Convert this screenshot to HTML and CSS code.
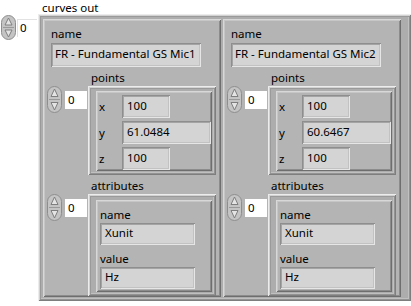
FILE: index.html
```html
<!DOCTYPE html>
<html lang="en">
<head>
    <meta charset="UTF-8">
    <title>curves out</title>
    <link rel="stylesheet" href="styles.css">
</head>
<body>
    <div class="caption">curves out</div>
    <div class="array-row">
        <div class="index outer-index">
            <svg class="spin" width="15" height="25" viewBox="0 0 15 25">
                <rect x="0.5" y="0.5" width="14" height="24" rx="7" fill="#c4c4c4" stroke="#8e8e8e"/>
                <path d="M7.5 3 L11 10 L4 10 Z" fill="#e4e4e4" stroke="#7e7e7e"/>
                <path d="M7.5 22 L11 15 L4 15 Z" fill="#e4e4e4" stroke="#7e7e7e"/>
                <line x1="2" y1="12.5" x2="13" y2="12.5" stroke="#9a9a9a"/>
            </svg>
            <div class="num">0</div>
        </div>
        <div class="array-frame outer-frame">
            <div class="cluster">
                <div class="lbl">name</div>
                <div class="field name-field">FR - Fundamental GS Mic1</div>
                <div class="lbl sub-lbl">points</div>
                <div class="sub-row">
                    <div class="index">
                        <svg class="spin" width="15" height="27" viewBox="0 0 15 27">
                            <rect x="0.5" y="0.5" width="14" height="26" rx="7" fill="#c4c4c4" stroke="#8e8e8e"/>
                            <path d="M7.5 3 L11 10.5 L4 10.5 Z" fill="#e4e4e4" stroke="#7e7e7e"/>
                            <path d="M7.5 24 L11 16.5 L4 16.5 Z" fill="#e4e4e4" stroke="#7e7e7e"/>
                            <line x1="2" y1="13.5" x2="13" y2="13.5" stroke="#9a9a9a"/>
                        </svg>
                        <div class="num">0</div>
                    </div>
                    <div class="array-frame points-frame">
                        <div class="cluster inner xyz">
                            <div class="axis">x</div><div class="field short">100</div>
                            <div class="axis">y</div><div class="field long">61.0484</div>
                            <div class="axis">z</div><div class="field short">100</div>
                        </div>
                    </div>
                </div>
                <div class="lbl sub-lbl">attributes</div>
                <div class="sub-row">
                    <div class="index">
                        <svg class="spin" width="15" height="27" viewBox="0 0 15 27">
                            <rect x="0.5" y="0.5" width="14" height="26" rx="7" fill="#c4c4c4" stroke="#8e8e8e"/>
                            <path d="M7.5 3 L11 10.5 L4 10.5 Z" fill="#e4e4e4" stroke="#7e7e7e"/>
                            <path d="M7.5 24 L11 16.5 L4 16.5 Z" fill="#e4e4e4" stroke="#7e7e7e"/>
                            <line x1="2" y1="13.5" x2="13" y2="13.5" stroke="#9a9a9a"/>
                        </svg>
                        <div class="num">0</div>
                    </div>
                    <div class="array-frame attr-frame">
                        <div class="cluster inner attr">
                            <div class="lbl">name</div>
                            <div class="field attr-field">Xunit</div>
                            <div class="lbl">value</div>
                            <div class="field attr-field">Hz</div>
                        </div>
                    </div>
                </div>
            </div>
            <div class="cluster">
                <div class="lbl">name</div>
                <div class="field name-field">FR - Fundamental GS Mic2</div>
                <div class="lbl sub-lbl">points</div>
                <div class="sub-row">
                    <div class="index">
                        <svg class="spin" width="15" height="27" viewBox="0 0 15 27">
                            <rect x="0.5" y="0.5" width="14" height="26" rx="7" fill="#c4c4c4" stroke="#8e8e8e"/>
                            <path d="M7.5 3 L11 10.5 L4 10.5 Z" fill="#e4e4e4" stroke="#7e7e7e"/>
                            <path d="M7.5 24 L11 16.5 L4 16.5 Z" fill="#e4e4e4" stroke="#7e7e7e"/>
                            <line x1="2" y1="13.5" x2="13" y2="13.5" stroke="#9a9a9a"/>
                        </svg>
                        <div class="num">0</div>
                    </div>
                    <div class="array-frame points-frame">
                        <div class="cluster inner xyz">
                            <div class="axis">x</div><div class="field short">100</div>
                            <div class="axis">y</div><div class="field long">60.6467</div>
                            <div class="axis">z</div><div class="field short">100</div>
                        </div>
                    </div>
                </div>
                <div class="lbl sub-lbl">attributes</div>
                <div class="sub-row">
                    <div class="index">
                        <svg class="spin" width="15" height="27" viewBox="0 0 15 27">
                            <rect x="0.5" y="0.5" width="14" height="26" rx="7" fill="#c4c4c4" stroke="#8e8e8e"/>
                            <path d="M7.5 3 L11 10.5 L4 10.5 Z" fill="#e4e4e4" stroke="#7e7e7e"/>
                            <path d="M7.5 24 L11 16.5 L4 16.5 Z" fill="#e4e4e4" stroke="#7e7e7e"/>
                            <line x1="2" y1="13.5" x2="13" y2="13.5" stroke="#9a9a9a"/>
                        </svg>
                        <div class="num">0</div>
                    </div>
                    <div class="array-frame attr-frame">
                        <div class="cluster inner attr">
                            <div class="lbl">name</div>
                            <div class="field attr-field">Xunit</div>
                            <div class="lbl">value</div>
                            <div class="field attr-field">Hz</div>
                        </div>
                    </div>
                </div>
            </div>
        </div>
    </div>
</body>
</html>
```

FILE: styles.css
```css
body {
    margin: 0;
    background: #ffffff;
    font-family: "Noto Sans", "DejaVu Sans", sans-serif;
    font-size: 11.5px;
    color: #000000;
    overflow: hidden;
}
.caption {
    margin-left: 42px;
    padding-top: 1px;
    height: 13px;
    line-height: 13px;
    white-space: nowrap;
}
.array-row {
    display: flex;
    align-items: flex-start;
}
.index {
    display: flex;
    align-items: center;
    flex: none;
}
.outer-index {
    width: 37px;
    padding-left: 1px;
    margin-top: 1px;
}
.spin {
    display: block;
    flex: none;
}
.num {
    width: 22px;
    height: 18px;
    line-height: 18px;
    background: #ffffff;
    padding-left: 3px;
    box-sizing: border-box;
    margin-left: 3px;
}
.outer-index .num {
    width: 20px;
    margin-left: 1px;
    box-shadow: inset 1px 1px 0 #e2e2e2;
}
.array-frame {
    box-sizing: border-box;
    background: #adadad;
    box-shadow:
        inset 1px 1px 0 #ececec,
        inset -1px -1px 0 #7e7e7e,
        inset 2px 2px 0 #d2d2d2,
        inset -2px -2px 0 #939393,
        inset 3px 3px 0 #9a9a9a,
        inset -3px -3px 0 #c0c0c0;
}
.outer-frame {
    flex: 1;
    height: 287px;
    display: flex;
    gap: 2px;
    padding: 5px 0 4px 5px;
}
.cluster {
    box-sizing: border-box;
    background: #b4b4b4;
    box-shadow:
        inset 1px 1px 0 #d8d8d8,
        inset -1px -1px 0 #6e6e6e,
        inset 2px 2px 0 #c6c6c6,
        inset -2px -2px 0 #8c8c8c;
}
.outer-frame > .cluster {
    width: 178px;
    flex: none;
    padding: 7px 4px 0 8px;
}
.lbl {
    height: 16px;
    line-height: 16px;
    white-space: nowrap;
}
.field {
    box-sizing: border-box;
    background: #d4d4d4;
    height: 24px;
    line-height: 22px;
    padding-left: 5px;
    white-space: nowrap;
    overflow: hidden;
    box-shadow:
        inset 1px 1px 0 #8e8e8e,
        inset -1px -1px 0 #e6e6e6,
        inset 2px 2px 0 #a4a4a4,
        inset -2px -2px 0 #c2c2c2;
}
.name-field {
    width: 150px;
    margin-top: 1px;
    padding-left: 4px;
}
.sub-lbl {
    margin: 3px 0 0 40px;
}
.sub-row {
    display: flex;
    align-items: flex-start;
    margin-left: -4px;
}
.sub-row .index {
    width: 41px;
}
.points-frame {
    width: 128px;
    height: 89px;
    padding: 5px 4px 4px 8px;
}
.attr-frame {
    width: 128px;
    height: 102px;
    padding: 6px 4px 4px 8px;
}
.inner {
    height: 100%;
}
.xyz {
    display: grid;
    grid-template-columns: 23px auto;
    row-gap: 2px;
    align-items: center;
    justify-items: start;
    padding: 3px 0 0 3px;
}
.field.short {
    width: 48px;
    height: 23px;
}
.field.long {
    width: 89px;
    height: 23px;
}
.attr {
    padding: 1px 0 0 4px;
}
.attr .lbl {
    margin-top: 6px;
}
.attr-field {
    width: 95px;
    height: 22px;
    line-height: 20px;
}
```
